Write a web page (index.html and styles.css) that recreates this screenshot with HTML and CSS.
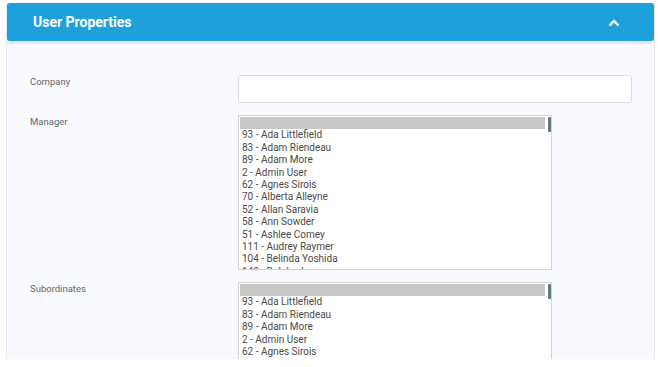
FILE: index.html
```html
<!DOCTYPE html>
<html lang="en">
<head>
    <meta charset="UTF-8">
    <meta name="viewport" content="width=device-width, initial-scale=1.0">
    <title>User Properties</title>
    <link rel="stylesheet" href="styles.css">
</head>
<body>
    <div class="panel">
        <div class="panel-header">
            <h2>User Properties</h2>
            <svg class="chevron" width="12" height="8" viewBox="0 0 12 8">
                <path d="M1.5 6.5 L6 2 L10.5 6.5" fill="none" stroke="#fff" stroke-width="2.4"/>
            </svg>
        </div>

        <div class="panel-body">
            <div class="form-row">
                <label for="company">Company</label>
                <input type="text" id="company">
            </div>

            <div class="form-row">
                <label>Manager</label>
                <div class="listbox">
                    <div class="options">
                        <div class="option selected">&nbsp;</div>
                        <div class="option">93 - Ada Littlefield</div>
                        <div class="option">83 - Adam Riendeau</div>
                        <div class="option">89 - Adam More</div>
                        <div class="option">2 - Admin User</div>
                        <div class="option">62 - Agnes Sirois</div>
                        <div class="option">70 - Alberta Alleyne</div>
                        <div class="option">52 - Allan Saravia</div>
                        <div class="option">58 - Ann Sowder</div>
                        <div class="option">51 - Ashlee Comey</div>
                        <div class="option">111 - Audrey Raymer</div>
                        <div class="option">104 - Belinda Yoshida</div>
                        <div class="option">140 - Bob burke</div>
                    </div>
                    <div class="scroll-track"><div class="thumb"></div></div>
                </div>
            </div>

            <div class="form-row">
                <label>Subordinates</label>
                <div class="listbox">
                    <div class="options">
                        <div class="option selected">&nbsp;</div>
                        <div class="option">93 - Ada Littlefield</div>
                        <div class="option">83 - Adam Riendeau</div>
                        <div class="option">89 - Adam More</div>
                        <div class="option">2 - Admin User</div>
                        <div class="option">62 - Agnes Sirois</div>
                        <div class="option">70 - Alberta Alleyne</div>
                    </div>
                    <div class="scroll-track"><div class="thumb"></div></div>
                </div>
            </div>
        </div>
    </div>
</body>
</html>
```

FILE: styles.css
```css
body {
    font-family: Roboto, "Liberation Sans", sans-serif;
    margin: 0;
    background: #fff;
}
.panel {
    margin: 3px 3px 0 6px;
    height: 356px;
    overflow: hidden;
    border-left: 1px solid #e8e8e8;
    border-right: 1px solid #e8e8e8;
    background: #f8faff;
}
.panel-header {
    height: 38px;
    background: #1ea1db;
    border-radius: 3px;
    box-shadow: 0 2px 3px rgba(0, 0, 0, 0.12);
    display: flex;
    align-items: center;
    justify-content: space-between;
    padding: 0 34px 0 26px;
}
.panel-header h2 {
    margin: 0;
    color: #fff;
    font-size: 14px;
    font-weight: bold;
}
.chevron {
    display: block;
    margin-top: 1px;
}
.panel-body {
    padding: 34px 22px 0 23px;
}
.form-row {
    display: grid;
    grid-template-columns: 208px 1fr;
    margin-bottom: 12px;
}
.form-row label {
    font-size: 9.5px;
    color: #666;
    padding-top: 1px;
}
.form-row input {
    height: 28px;
    box-sizing: border-box;
    border: 1px solid #dcdcdc;
    border-radius: 3px;
    background: #fff;
}
.listbox {
    width: 314px;
    height: 155px;
    box-sizing: border-box;
    border: 1px solid #d3d3d3;
    background: #fff;
    display: flex;
}
.options {
    flex: 1;
    padding: 1px;
    overflow: hidden;
}
.option {
    font-size: 10px;
    line-height: 12.4px;
    color: #4a4a4a;
    padding: 0 2px;
    white-space: nowrap;
}
.option.selected {
    background: #c8c8c8;
}
.scroll-track {
    width: 5px;
}
.thumb {
    width: 3px;
    height: 15px;
    margin: 1px 0 0 2px;
    border-radius: 1px;
    background: #5d7886;
}
```
